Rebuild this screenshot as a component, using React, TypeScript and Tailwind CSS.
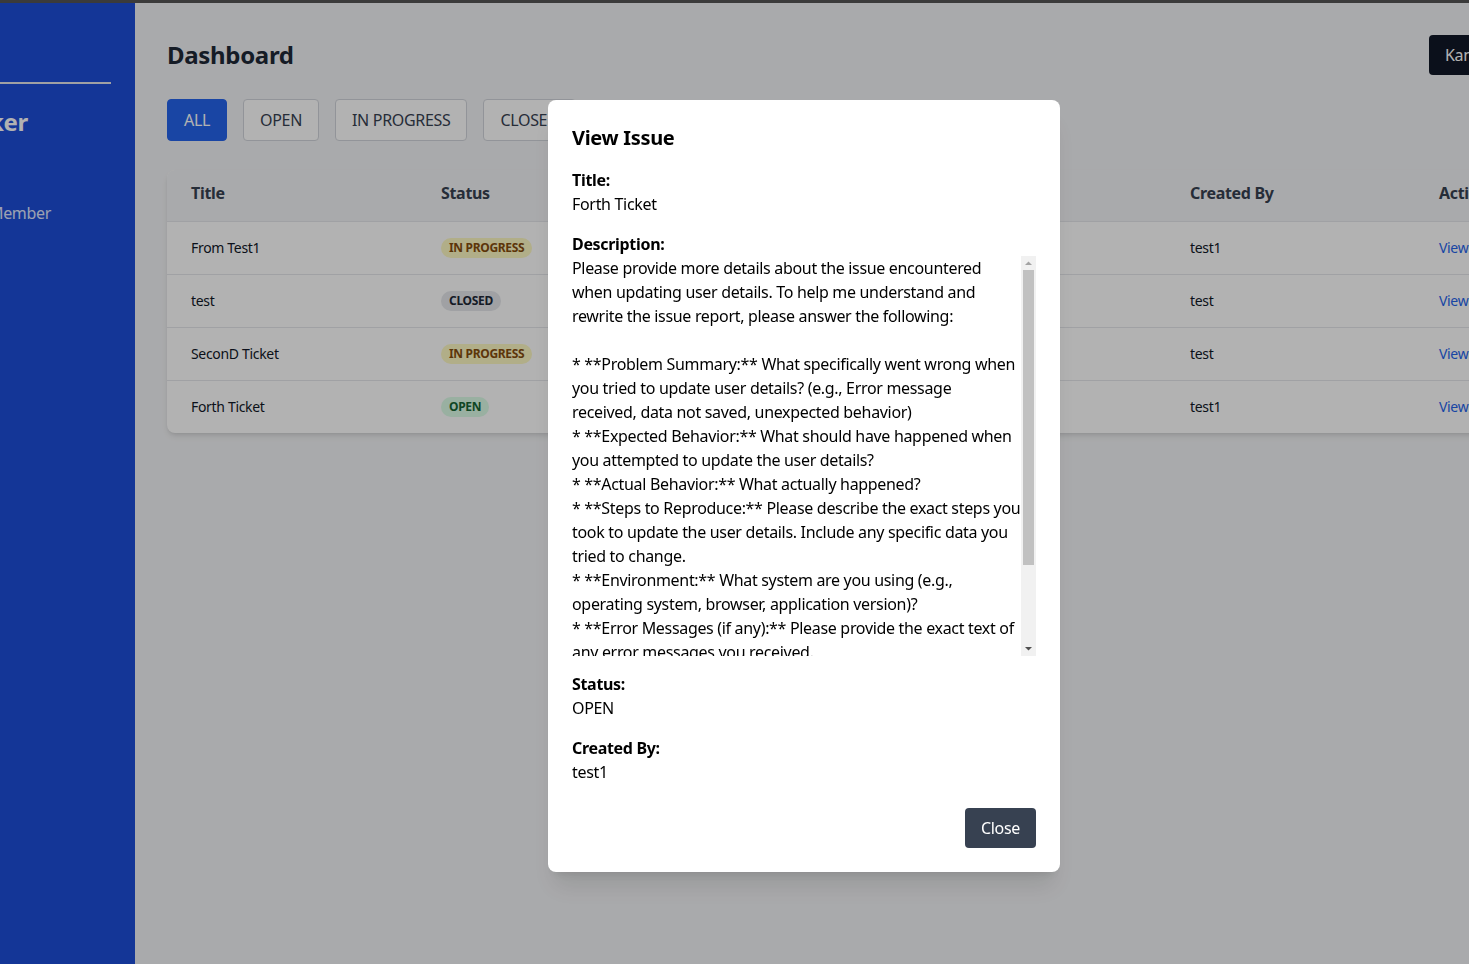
const FONT = '"Noto Sans", "Open Sans", sans-serif'

const issues = [
  { title: 'From Test1', status: 'IN PROGRESS', priority: 'High', assignee: 'test', createdBy: 'test1' },
  { title: 'test', status: 'CLOSED', priority: 'Low', assignee: 'test1', createdBy: 'test' },
  { title: 'SeconD Ticket', status: 'IN PROGRESS', priority: 'Medium', assignee: 'test1', createdBy: 'test' },
  { title: 'Forth Ticket', status: 'OPEN', priority: 'Medium', assignee: 'test', createdBy: 'test1' },
]

const description = `Please provide more details about the issue encountered when updating user details. To help me understand and rewrite the issue report, please answer the following:

* **Problem Summary:** What specifically went wrong when you tried to update user details? (e.g., Error message
received, data not saved, unexpected behavior)
* **Expected Behavior:** What should have happened when you attempted to update the user details?
* **Actual Behavior:** What actually happened?
* **Steps to Reproduce:** Please describe the exact steps you took to update the user details. Include any specific data you tried to change.
* **Environment:** What system are you using (e.g., operating system, browser, application version)?
* **Error Messages (if any):** Please provide the exact text of any error messages you received.
* **Frequency:** How often does this happen?

Once I have this information, I can rewrite the issue report.`

function StatusBadge({ status }: { status: string }) {
  let cls = 'bg-[#fef9c3] text-[#854d0e]'
  if (status === 'CLOSED') cls = 'bg-[#e5e7eb] text-[#1f2937]'
  if (status === 'OPEN') cls = 'bg-[#dcfce7] text-[#166534]'
  return (
    <span className={`block w-fit px-2 py-0.5 rounded-full text-xs font-bold leading-4 ${cls}`}>
      {status}
    </span>
  )
}

// the browser hides real scrollbars, so draw the classic one
function FakeScrollbar() {
  return (
    <div className="w-[15px] shrink-0 bg-[#f1f1f1] flex flex-col items-center">
      <svg width="15" height="14" viewBox="0 0 15 14">
        <path d="M4 9 L7.5 5.5 L11 9 Z" fill="#a3a3a3" />
      </svg>
      <div className="w-[11px] h-[295px] bg-[#c1c1c1]" />
      <div className="flex-1" />
      <svg width="15" height="14" viewBox="0 0 15 14">
        <path d="M4 5 L7.5 8.5 L11 5 Z" fill="#505050" />
      </svg>
    </div>
  )
}

export default function App() {
  return (
    <div className="w-[1469px] h-[964px] overflow-hidden bg-[#f3f4f6] tracking-[-0.02em]" style={{ fontFamily: FONT }}>
      <div className="h-[3px] bg-[#555555]" />
      <div className="flex h-[961px]">
        <aside className="w-64 shrink-0 -ml-[121px] bg-[#1d4ed8] text-white">
          <div className="px-6">
            <div className="h-[81px] border-b-2 border-[#e5e7eb]" />
            <div className="mt-[22px] w-[125px] flex justify-end whitespace-nowrap">
              <h2 className="text-2xl font-bold text-white">Issue Tracker</h2>
            </div>
            <nav className="mt-[63px] w-[148px] flex justify-end whitespace-nowrap">
              <span className="text-base text-[#e0e7ff]">Team Member</span>
            </nav>
          </div>
        </aside>

        <main className="w-[1461px] shrink-0 px-8 pt-8">
          <div className="flex items-center justify-between mb-6">
            <h1 className="text-2xl font-bold text-[#1f2937]">Dashboard</h1>
            <button className="h-10 px-4 rounded bg-[#111827] text-white text-base">Kanban Board</button>
          </div>

          <div className="flex gap-4 mb-[29px]">
            <button className="px-4 py-2 rounded border border-[#2563eb] bg-[#2563eb] text-white text-base">ALL</button>
            <button className="px-4 py-2 rounded border border-[#d1d5db] bg-white text-[#374151] text-base">OPEN</button>
            <button className="px-4 py-2 rounded border border-[#d1d5db] bg-white text-[#374151] text-base">IN PROGRESS</button>
            <button className="px-4 py-2 rounded border border-[#d1d5db] bg-white text-[#374151] text-base">CLOSED</button>
          </div>

          <div className="bg-white rounded-lg shadow-md overflow-hidden">
            <table className="w-full text-left border-collapse">
              <thead className="bg-[#f3f4f6]">
                <tr className="border-b border-[#e5e7eb]">
                  <th className="w-[250px] px-6 pt-[11px] pb-[16px] font-bold text-[#374151]">Title</th>
                  <th className="w-[250px] px-6 pt-[11px] pb-[16px] font-bold text-[#374151]">Status</th>
                  <th className="w-[250px] px-6 pt-[11px] pb-[16px] font-bold text-[#374151]">Priority</th>
                  <th className="w-[249px] px-6 pt-[11px] pb-[16px] font-bold text-[#374151]">Assigned To</th>
                  <th className="w-[249px] px-6 pt-[11px] pb-[16px] font-bold text-[#374151]">Created By</th>
                  <th className="px-6 pt-[11px] pb-[16px] font-bold text-[#374151]">Actions</th>
                </tr>
              </thead>
              <tbody>
                {issues.map((issue, i) => (
                  <tr key={i} className={i < issues.length - 1 ? 'border-b border-[#e5e7eb]' : ''}>
                    <td className="px-6 py-4 text-sm text-[#111827]">{issue.title}</td>
                    <td className="px-6 py-4 text-sm"><StatusBadge status={issue.status} /></td>
                    <td className="px-6 py-4 text-sm text-[#111827]">{issue.priority}</td>
                    <td className="px-6 py-4 text-sm text-[#111827]">{issue.assignee}</td>
                    <td className="px-6 py-4 text-sm text-[#111827]">{issue.createdBy}</td>
                    <td className="px-6 py-4 text-sm text-[#2563eb]">View</td>
                  </tr>
                ))}
              </tbody>
            </table>
          </div>
        </main>
      </div>

      {/* View Issue modal */}
      <div className="fixed inset-0 bg-black/30 flex items-start tracking-[-0.02em]" style={{ fontFamily: FONT }}>
        <div className="ml-[548px] mt-[100px] w-[512px] bg-white rounded-lg shadow-xl p-6 text-black">
          <h3 className="text-xl font-bold mb-4">View Issue</h3>
          <div className="mb-4">
            <div className="font-bold">Title:</div>
            <div>Forth Ticket</div>
          </div>
          <div className="mb-4">
            <div className="font-bold">Description:</div>
            <div className="flex h-[400px]">
              <div className="flex-1 overflow-y-auto whitespace-pre-wrap [scrollbar-width:none]">{description}</div>
              <FakeScrollbar />
            </div>
          </div>
          <div className="mb-4">
            <div className="font-bold">Status:</div>
            <div>OPEN</div>
          </div>
          <div>
            <div className="font-bold">Created By:</div>
            <div>test1</div>
          </div>
          <div className="flex justify-end mt-6">
            <button className="px-4 py-2 rounded bg-[#374151] text-white text-base">Close</button>
          </div>
        </div>
      </div>
    </div>
  )
}
